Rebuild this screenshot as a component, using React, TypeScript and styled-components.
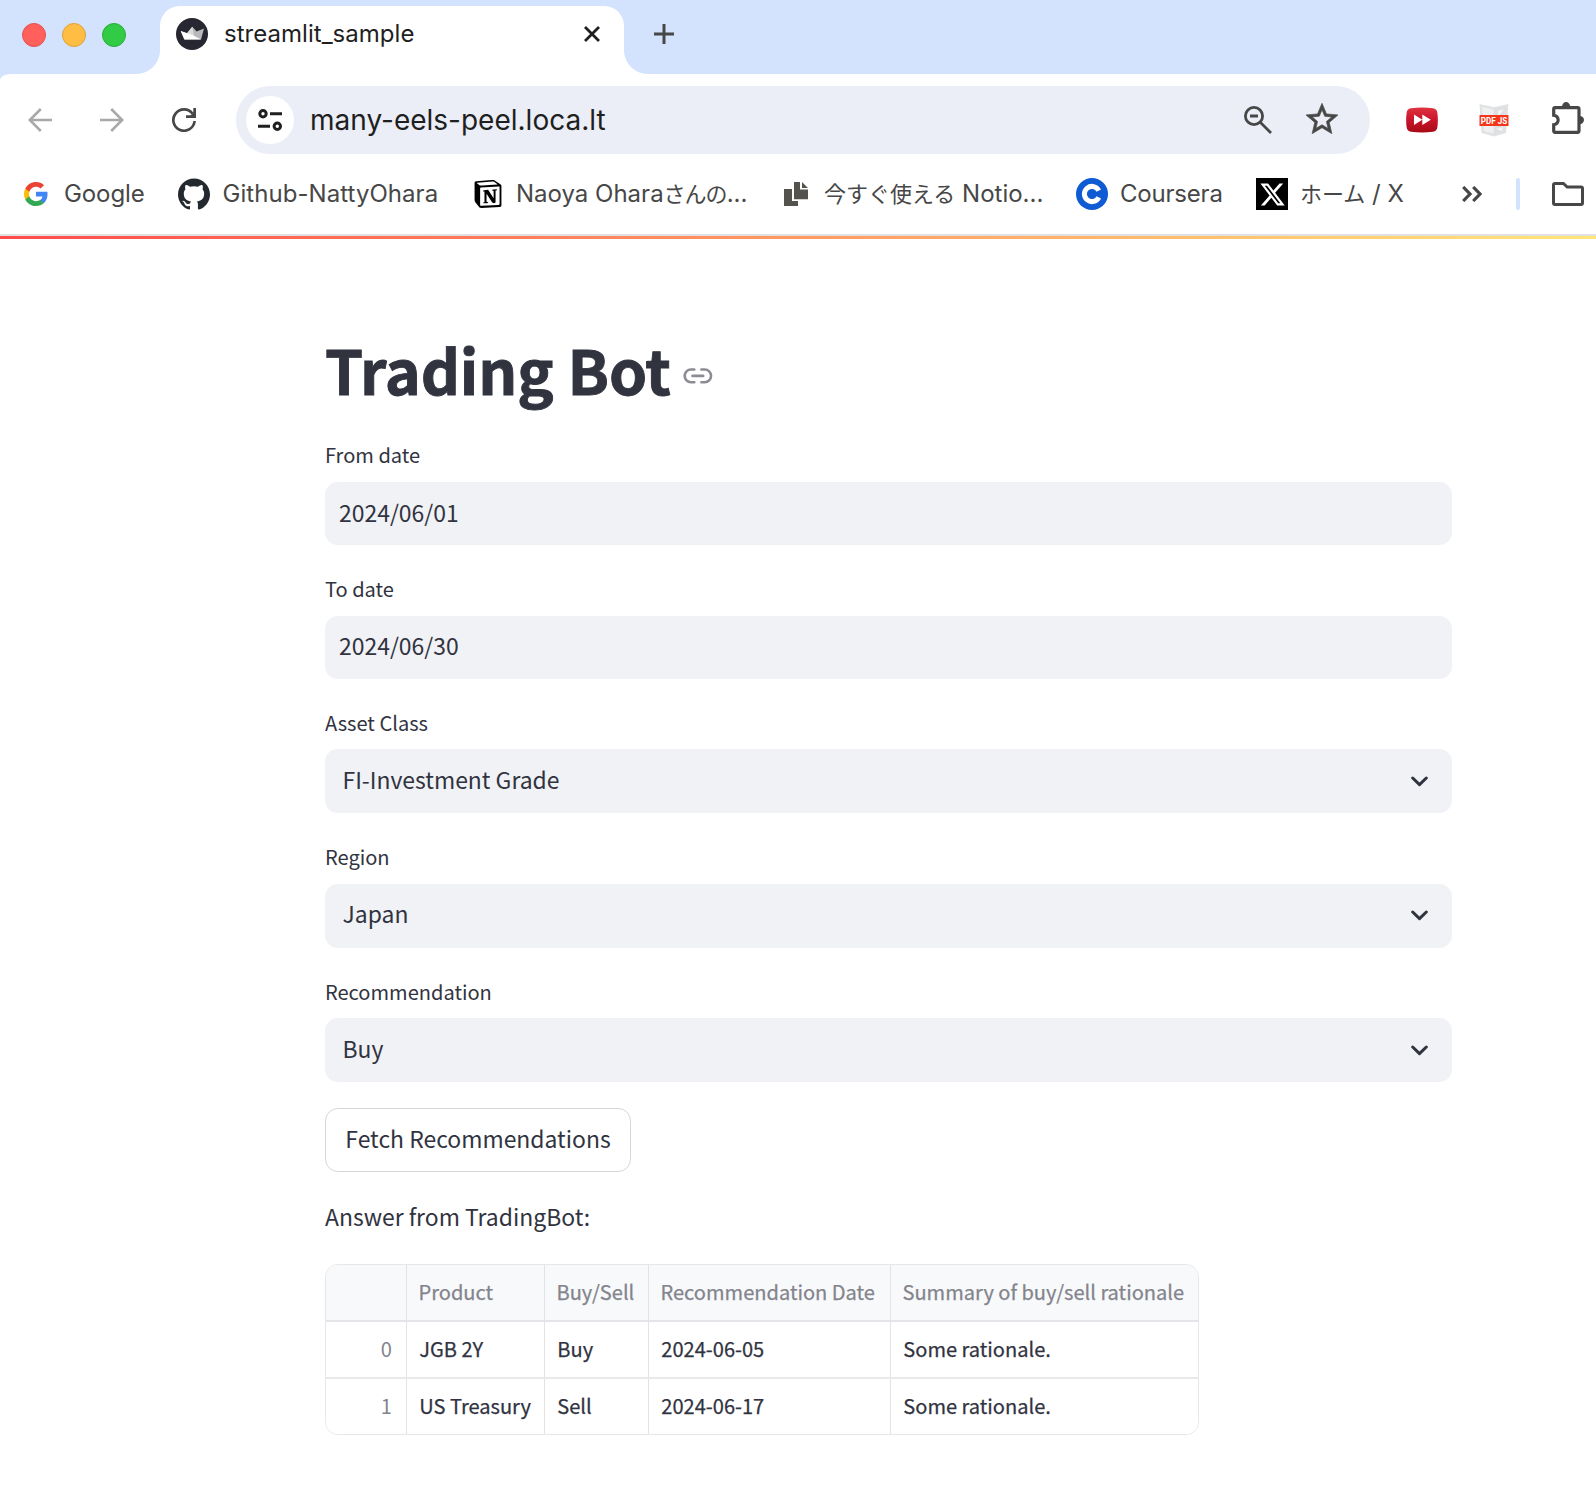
import React from "react";
import styled, { createGlobalStyle } from "styled-components";
import { SiNotion, SiGithub } from "react-icons/si";
import { FaXTwitter } from "react-icons/fa6";

const ui = `Inter, "Noto Sans CJK JP", sans-serif`;
const sans = `"Noto Sans CJK JP", "Noto Sans", sans-serif`;

const GlobalStyle = createGlobalStyle`
  * { box-sizing: border-box; }
  body { margin: 0; background: #fff; }
  svg { display: block; flex: none; }
`;

const Window = styled.div`
  width: 1596px;
  height: 1488px;
  overflow: hidden;
  background: #fff;
`;

/* ---------- browser chrome ---------- */

const TabStrip = styled.header`
  display: flex;
  height: 74px;
  padding-left: 22px;
  background: #d4e3fd;
`;

const Lights = styled.div`
  display: flex;
  gap: 16px;
  width: 138px;
  padding-top: 23px;
`;

const Light = styled.span<{ $fill: string; $edge: string }>`
  width: 24px;
  height: 24px;
  border-radius: 50%;
  background: ${(p) => p.$fill};
  border: 1px solid ${(p) => p.$edge};
`;

const Tab = styled.div`
  position: relative;
  display: flex;
  align-items: center;
  width: 464px;
  height: 68px;
  margin-top: 6px;
  padding: 0 24px 12px 16px;
  border-radius: 20px 20px 0 0;
  background: #fff;

  &::before,
  &::after {
    content: "";
    position: absolute;
    bottom: 0;
    width: 24px;
    height: 24px;
  }
  &::before {
    left: -24px;
    background: radial-gradient(circle at 0 0, transparent 23.5px, #fff 24.5px);
  }
  &::after {
    right: -24px;
    background: radial-gradient(circle at 100% 0, transparent 23.5px, #fff 24.5px);
  }
`;

const TabTitle = styled.span`
  flex: 1;
  margin-left: 16px;
  font: 400 24px/32px ${ui};
  letter-spacing: 0.03px;
  color: #1f1f1f;
`;

const NewTab = styled.div`
  padding: 24px 0 0 30px;
`;

const ToolbarShell = styled.div`
  background: #d4e3fd;
`;

const Toolbar = styled.nav`
  display: flex;
  align-items: center;
  height: 92px;
  padding-left: 28px;
  border-top-left-radius: 11px 6px;
  background: #fff;
`;

const NavButtons = styled.div`
  display: flex;
  gap: 48px;
  width: 208px;
`;

const Omnibox = styled.div`
  display: flex;
  align-items: center;
  flex: none;
  width: 1134px;
  height: 68px;
  padding: 0 32px 0 10px;
  border-radius: 34px;
  background: #ebeef7;
`;

const SiteChip = styled.span`
  display: grid;
  place-items: center;
  width: 48px;
  height: 48px;
  border-radius: 50%;
  background: #fff;
`;

const Url = styled.span`
  flex: 1;
  margin-left: 16px;
  font: 400 28px/40px ${ui};
  color: #1f1f1f;
`;

const OmniActions = styled.div`
  display: flex;
  align-items: center;
  gap: 34px;
`;

const StarSlot = styled.span`
  padding-bottom: 3px;
`;

const Extensions = styled.div`
  display: flex;
  align-items: center;
  gap: 40px;
  margin-left: 36px;
`;

const PuzzleSlot = styled.span`
  padding: 0 0 4px 2px;
`;

const Bookmarks = styled.div`
  display: flex;
  align-items: center;
  height: 68px;
  padding: 0 12px 12px 24px;
`;

const Bookmark = styled.div<{ $width: number; $gap: number; $track?: number }>`
  display: flex;
  align-items: center;
  flex: none;
  gap: ${(p) => p.$gap}px;
  width: ${(p) => p.$width}px;
  white-space: pre;
  font: 400 24px/32px ${ui};
  letter-spacing: ${(p) => p.$track ?? 0}px;
  color: #474747;
`;

const Ja = styled.span<{ $track?: number }>`
  font-size: 22px;
  letter-spacing: ${(p) => p.$track ?? 0}px;
`;

const XBadge = styled.span`
  display: grid;
  place-items: center;
  width: 32px;
  height: 32px;
  background: #000;
  color: #fff;
`;

const Divider = styled.span`
  flex: none;
  width: 4px;
  height: 32px;
  margin: 0 32px 0 34px;
  border-radius: 2px;
  background: #d3e3fd;
`;

const Decoration = styled.div`
  height: 5px;
  border-top: 2px solid #e1e1e3;
  background: linear-gradient(90deg, #ff4b4b, #fffd80) 0 0 / 1820px 100%;
`;

/* ---------- page ---------- */

const Main = styled.main`
  width: 1127px;
  margin-left: 325px;
  padding-top: 96px;
  color: #31333f;
  font-family: ${sans};
`;

const TitleRow = styled.div`
  display: flex;
  align-items: center;
  height: 68px;
  gap: 12px;
`;

const Title = styled.h1`
  margin: 0;
  font: 700 61px/84px ${sans};
  letter-spacing: -0.08px;
  -webkit-text-stroke: 0.9px #31333f;
`;

const Anchor = styled.span`
  padding-top: 14px;
`;

const Field = styled.div<{ $space: number }>`
  margin-top: ${(p) => p.$space}px;
`;

const Label = styled.label<{ $lead: number }>`
  display: block;
  height: 34px;
  font: 400 20.06px/28px ${sans};
  line-height: ${(p) => p.$lead}px;
`;

const Control = styled.div<{ $select?: boolean; $bottom: number }>`
  display: flex;
  align-items: center;
  justify-content: space-between;
  height: ${(p) => (p.$select ? 64 : 63)}px;
  padding: 0 24.5px ${(p) => p.$bottom}px ${(p) => (p.$select ? 17.5 : 14)}px;
  border-radius: 12.8px;
  background: #f0f2f6;
  font: 400 22.93px/40px ${sans};
`;

const Caret = styled.span`
  padding-top: 5px;
`;

const FetchButton = styled.button`
  display: block;
  width: 306px;
  height: 64px;
  margin-top: 26px;
  padding: 0 0 5px;
  border: 1px solid #d6d6d9;
  border-radius: 12.8px;
  background: #fff;
  color: inherit;
  font: 400 22.93px/40px ${sans};
  white-space: nowrap;
`;

const Answer = styled.p`
  margin: 24px 0 28px;
  font: 400 22.93px/40px ${sans};
`;

const Grid = styled.div`
  display: grid;
  grid-template-columns: 81px 138px 104px 242px 1fr;
  grid-template-rows: 57px 57px 1fr;
  width: 874px;
  height: 171px;
  overflow: hidden;
  border: 1px solid #e6e7ea;
  border-radius: 12.8px;
`;

const Cell = styled.div<{ $head?: boolean; $index?: boolean; $last?: boolean; $bottom?: boolean }>`
  display: flex;
  align-items: center;
  justify-content: ${(p) => (p.$index ? "flex-end" : "flex-start")};
  padding: 0 ${(p) => (p.$index ? 14 : 0)}px 2px ${(p) => (p.$head ? 11.5 : 12.3)}px;
  border-right: ${(p) => (p.$last ? 0 : 1)}px solid #e3e3e6;
  border-bottom: ${(p) => (p.$bottom ? 0 : 2)}px solid ${(p) => (p.$head ? "#e4e5e8" : "#e9e9eb")};
  background: ${(p) => (p.$head ? "#f8f9fb" : "#fff")};
  color: ${(p) => (p.$head || p.$index ? "#83848c" : "#31333f")};
  font: 400 20.06px/28px ${sans};
  -webkit-text-stroke: ${(p) => (p.$index ? 0 : 0.25)}px;
  white-space: nowrap;
`;

/* ---------- icons ---------- */

const Crown = () => (
  <svg width="32" height="32" viewBox="0 0 32 32">
    <circle cx="16" cy="16" r="16" fill="#262730" />
    <path d="M4.7 13 L11 15.3 L16.3 8.7 L20.6 13.6 L28 10.6 L25 21.6 H8.4Z" fill="#b9b9bc" />
    <path d="M11 15.3 L16.3 8.7 L18 18Z" fill="#dcdcde" />
    <path d="M4.7 13 L16.5 17 L25 21.6 H8.4Z" fill="#fff" />
  </svg>
);

const Close = () => (
  <svg width="16" height="16" viewBox="0 0 16 16" stroke="#1f1f1f" strokeWidth="2.8">
    <path d="M1 1 L15 15 M15 1 L1 15" />
  </svg>
);

const Plus = () => (
  <svg width="20" height="20" viewBox="0 0 20 20" stroke="#474747" strokeWidth="3">
    <path d="M10 0 V20 M0 10 H20" />
  </svg>
);

const Arrow = ({ flip }: { flip?: boolean }) => (
  <svg width="24" height="24" viewBox="0 0 24 24" fill="none" stroke="#a9a9a9" strokeWidth="2.6">
    <path
      transform={flip ? "translate(24 0) scale(-1 1)" : undefined}
      d="M24 12 H2 M12.8 1 L1.8 12 L12.8 23"
    />
  </svg>
);

const Reload = () => (
  <svg width="24" height="24" viewBox="0 0 24 24" fill="none" stroke="#474747" strokeWidth="2.7">
    <path d="M22.6 13 A10.65 10.65 0 1 1 20.6 5.8" />
    <path d="M22.65 0 V8.65 H14" />
    <path d="M22.6 3.5 V8.6 H17.5Z" fill="#474747" stroke="none" />
  </svg>
);

const Tune = () => (
  <svg width="24" height="24" viewBox="0 0 24 24" fill="none" stroke="#1f1f1f" strokeWidth="3">
    <circle cx="5" cy="5.7" r="3.2" />
    <path d="M12 5.7 H24 M0 18.3 H12" />
    <circle cx="19.3" cy="18.3" r="3.2" />
  </svg>
);

const ZoomOut = () => (
  <svg width="28" height="28" viewBox="0 0 28 28" fill="none" stroke="#474747" strokeWidth="2.8">
    <circle cx="10" cy="10" r="8.6" />
    <path d="M16 16 L27 27 M6 10 H14" />
  </svg>
);

const Star = () => (
  <svg width="32" height="31" viewBox="2 2 20 19" fill="#474747" stroke="#474747" strokeWidth=".4" overflow="visible">
    <path d="M22 9.24l-7.19-.62L12 2 9.19 8.63 2 9.24l5.46 4.73L5.82 21 12 17.27 18.18 21l-1.63-7.03L22 9.24zM12 15.4l-3.76 2.27 1-4.28-3.32-2.88 4.38-.38L12 6.1l1.71 4.04 4.38.38-3.32 2.88 1 4.28L12 15.4z" />
  </svg>
);

const FastForward = () => (
  <svg width="32" height="26" viewBox="0 0 32 26">
    <defs>
      <linearGradient id="ff" x1="0" y1="0" x2="0" y2="1">
        <stop offset="0" stopColor="#e0333f" />
        <stop offset=".5" stopColor="#c9142a" />
        <stop offset="1" stopColor="#a80a16" />
      </linearGradient>
    </defs>
    <path d="M5 1.3 Q16 -.4 27 1.3 Q31 1.8 31.4 6 Q32.3 13 31.4 20 Q31 24.2 27 24.7 Q16 26.2 5 24.7 Q1 24.2 .6 20 Q-.3 13 .6 6 Q1 1.8 5 1.3Z" fill="url(#ff)" />
    <path d="M8 7.5 L16.3 12.7 L8 18Z M16.3 7.5 L24.8 12.7 L16.3 18Z" fill="#fff" />
  </svg>
);

const PdfJs = () => (
  <svg width="32" height="34" viewBox="0 0 32 34">
    <path d="M1.5 1 L16 4.2 L30.5 1 L28 30 L16 33.5 L3.5 30Z" fill="#e0e2e3" />
    <path d="M4 4 L15.5 6.5 V30.5 L6 28Z" fill="#eff0f1" />
    <path d="M28 4 L16.5 6.5 V30.5 L26 28Z" fill="#dddfe0" />
    <path d="M20 8 L26 6 L20 14Z M18 26 L25 24 L24 28Z" fill="#f5f5f5" />
    <rect x="1.5" y="12" width="29" height="11" fill="#f5351c" />
    <text x="2.8" y="21.2" textLength="26.4" lengthAdjust="spacingAndGlyphs" fontFamily="Roboto, sans-serif" fontWeight="700" fontSize="9.4" fill="#fff">PDF JS</text>
  </svg>
);

const Puzzle = () => (
  <svg width="32" height="32" viewBox="0 0 32 32" fill="none" stroke="#474747" strokeWidth="3.2">
    <path d="M1.7 13.3 V7.2 Q1.7 5.7 3.2 5.7 H25.6 Q27 5.7 27 7.2 V28.8 Q27 30.3 25.6 30.3 H3.2 Q1.7 30.3 1.7 28.8 V22.7 C7.6 21.6 7.6 14.4 1.7 13.3Z" />
    <path d="M10 5 A4.1 5 0 0 1 18.2 5Z M27.5 13.9 A4.5 4.1 0 0 1 27.5 22.1Z" fill="#474747" stroke="none" />
  </svg>
);

const GoogleG = () => (
  <svg width="24" height="24" viewBox="1 1 22 22">
    <path fill="#4285F4" d="M22.56 12.25c0-.78-.07-1.53-.2-2.25H12v4.26h5.92c-.26 1.37-1.04 2.53-2.21 3.31v2.77h3.57c2.08-1.92 3.28-4.74 3.28-8.09z" />
    <path fill="#34A853" d="M12 23c2.97 0 5.46-.98 7.28-2.66l-3.57-2.77c-.98.66-2.23 1.06-3.71 1.06-2.86 0-5.29-1.93-6.16-4.53H2.18v2.84C3.99 20.53 7.7 23 12 23z" />
    <path fill="#FBBC05" d="M5.84 14.09c-.22-.66-.35-1.36-.35-2.09s.13-1.43.35-2.09V7.07H2.18C1.43 8.55 1 10.22 1 12s.43 3.45 1.18 4.93l3.66-2.84z" />
    <path fill="#EA4335" d="M12 5.38c1.62 0 3.06.56 4.21 1.64l3.15-3.15C17.45 2.09 14.97 1 12 1 7.7 1 3.99 3.47 2.18 7.07l3.66 2.84c.87-2.6 3.3-4.53 6.16-4.53z" />
  </svg>
);

const Pages = () => (
  <svg width="24" height="24" viewBox="0 0 24 24" fill="#55534e">
    <path d="M0 7 H8 V19 H14 V24 H0Z" />
    <path d="M10 0 H16 V7.5 H24 V17.2 H10Z M18 0 L24 6 H18Z" />
  </svg>
);

const CourseraMark = () => (
  <svg width="32" height="32" viewBox="0 0 32 32">
    <circle cx="16" cy="16" r="16" fill="#0f5bd3" />
    <path d="M22.8 12.6 A7.6 7.6 0 1 0 22.8 19.4" fill="none" stroke="#fff" strokeWidth="5" />
  </svg>
);

const More = () => (
  <svg width="20" height="16" viewBox="0 0 20 16" fill="none" stroke="#474747" strokeWidth="3.2">
    <path d="M1.2 1 L8 8 L1.2 15 M11.2 1 L18 8 L11.2 15" />
  </svg>
);

const Folder = () => (
  <svg width="32" height="24" viewBox="0 0 32 24" fill="none" stroke="#474747" strokeWidth="3">
    <path d="M3 1.5 H11.4 L15.2 5 H29 Q30.5 5 30.5 6.5 V21 Q30.5 22.5 29 22.5 H3 Q1.5 22.5 1.5 21 V3 Q1.5 1.5 3 1.5Z" />
  </svg>
);

const LinkIcon = () => (
  <svg width="30" height="16" viewBox="0 0 30 16" fill="none" stroke="#8b8c94" strokeWidth="2.6" strokeLinecap="round">
    <path d="M11.3 1.5 H8 A6.3 6.3 0 0 0 8 14.2 H11.3 M18.4 1.5 H21.7 A6.3 6.3 0 0 1 21.7 14.2 H18.4 M9.5 7.9 H20.2" />
  </svg>
);

const Chevron = () => (
  <svg width="17" height="11" viewBox="0 0 17 11" fill="none" stroke="#31333f" strokeWidth="3" strokeLinecap="round" strokeLinejoin="round">
    <path d="M1.7 2 L8.5 8.6 L15.3 2" />
  </svg>
);

/* ---------- data ---------- */

const fields = [
  { label: "From date", value: "2024/06/01", space: 45, lead: 14, bottom: 3 },
  { label: "To date", value: "2024/06/30", space: 37, lead: 14, bottom: 5 },
  { label: "Asset Class", value: "FI-Investment Grade", select: true, space: 36, lead: 16, bottom: 5 },
  { label: "Region", value: "Japan", select: true, space: 37, lead: 14, bottom: 7 },
  { label: "Recommendation", value: "Buy", select: true, space: 36, lead: 16, bottom: 5 },
];

const header = ["", "Product", "Buy/Sell", "Recommendation Date", "Summary of buy/sell rationale"];
const rows = [
  ["0", "JGB 2Y", "Buy", "2024-06-05", "Some rationale."],
  ["1", "US Treasury", "Sell", "2024-06-17", "Some rationale."],
];

export default function App() {
  return (
    <Window>
      <GlobalStyle />
      <TabStrip>
        <Lights>
          <Light $fill="#ff605c" $edge="#e2514d" />
          <Light $fill="#ffbd44" $edge="#dea03a" />
          <Light $fill="#32cb46" $edge="#27ae35" />
        </Lights>
        <Tab>
          <Crown />
          <TabTitle>streamlit_sample</TabTitle>
          <Close />
        </Tab>
        <NewTab>
          <Plus />
        </NewTab>
      </TabStrip>
      <ToolbarShell>
        <Toolbar>
          <NavButtons>
            <Arrow />
            <Arrow flip />
            <Reload />
          </NavButtons>
          <Omnibox>
            <SiteChip>
              <Tune />
            </SiteChip>
            <Url>many-eels-peel.loca.lt</Url>
            <OmniActions>
              <ZoomOut />
              <StarSlot>
                <Star />
              </StarSlot>
            </OmniActions>
          </Omnibox>
          <Extensions>
            <FastForward />
            <PdfJs />
            <PuzzleSlot>
              <Puzzle />
            </PuzzleSlot>
          </Extensions>
        </Toolbar>
      </ToolbarShell>
      <Bookmarks>
        <Bookmark $width={154} $gap={16} $track={-0.1}>
          <GoogleG />
          Google
        </Bookmark>
        <Bookmark $width={296} $gap={12.5} $track={0.05}>
          <SiGithub size={32} color="#24292f" />
          Github-NattyOhara
        </Bookmark>
        <Bookmark $width={310} $gap={14}>
          <SiNotion size={28} color="#000" />
          <span>
            Naoya Ohara<Ja $track={-1}>さんの</Ja>...
          </span>
        </Bookmark>
        <Bookmark $width={292} $gap={16}>
          <Pages />
          <span>
            <Ja>今すぐ使える</Ja> Notio...
          </span>
        </Bookmark>
        <Bookmark $width={180} $gap={12} $track={-0.2}>
          <CourseraMark />
          Coursera
        </Bookmark>
        <Bookmark $width={206} $gap={12}>
          <XBadge>
            <FaXTwitter size={27} />
          </XBadge>
          <span>
            <Ja>ホーム</Ja> / X
          </span>
        </Bookmark>
        <More />
        <Divider />
        <Folder />
      </Bookmarks>
      <Decoration />
      <Main>
        <TitleRow>
          <Title>Trading Bot</Title>
          <Anchor>
            <LinkIcon />
          </Anchor>
        </TitleRow>
        {fields.map((f) => (
          <Field key={f.label} $space={f.space}>
            <Label $lead={f.lead}>{f.label}</Label>
            <Control $select={f.select} $bottom={f.bottom}>
              {f.value}
              {f.select && (
                <Caret>
                  <Chevron />
                </Caret>
              )}
            </Control>
          </Field>
        ))}
        <FetchButton>Fetch Recommendations</FetchButton>
        <Answer>Answer from TradingBot:</Answer>
        <Grid>
          {header.map((h, i) => (
            <Cell key={i} $head $last={i === 4}>
              {h}
            </Cell>
          ))}
          {rows.map((row, r) =>
            row.map((v, i) => (
              <Cell key={`${r}-${i}`} $index={i === 0} $last={i === 4} $bottom={r === 1}>
                {v}
              </Cell>
            ))
          )}
        </Grid>
      </Main>
    </Window>
  );
}
